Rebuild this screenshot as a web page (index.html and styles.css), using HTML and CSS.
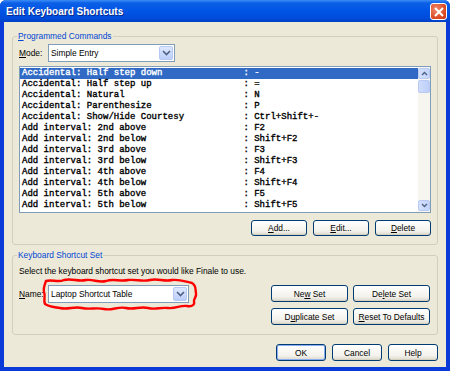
FILE: index.html
```html
<!DOCTYPE html>
<html lang="en">
<head>
    <meta charset="UTF-8">
    <title>Edit Keyboard Shortcuts</title>
    <link rel="stylesheet" href="styles.css">
</head>
<body>
<div class="window">
    <div class="titlebar">
        <span class="title">Edit Keyboard Shortcuts</span>
        <span class="close-button">
            <svg width="10" height="10" viewBox="0 0 10 10"><path d="M1,1 L9,9 M9,1 L1,9" stroke="#fff" stroke-width="2" fill="none"/></svg>
        </span>
    </div>
    <div class="client">
        <fieldset class="group commands-group">
            <legend><u>P</u>rogrammed Commands</legend>
            <div class="field-row">
                <span class="field-label"><u>M</u>ode:</span>
                <div class="combo mode-combo">
                    <span class="combo-text">Simple Entry</span>
                    <span class="combo-button">
                        <svg width="9" height="6" viewBox="0 0 9 6"><path d="M1,1 L4.5,4.5 L8,1" stroke="#4d6185" stroke-width="1.6" fill="none"/></svg>
                    </span>
                </div>
            </div>
            <div class="listbox">
                <div class="rows">
                    <div class="row selected"><span class="cmd">Accidental: Half step down</span><span class="key">: -</span></div>
                    <div class="row"><span class="cmd">Accidental: Half step up</span><span class="key">: =</span></div>
                    <div class="row"><span class="cmd">Accidental: Natural</span><span class="key">: N</span></div>
                    <div class="row"><span class="cmd">Accidental: Parenthesize</span><span class="key">: P</span></div>
                    <div class="row"><span class="cmd">Accidental: Show/Hide Courtesy</span><span class="key">: Ctrl+Shift+-</span></div>
                    <div class="row"><span class="cmd">Add interval: 2nd above</span><span class="key">: F2</span></div>
                    <div class="row"><span class="cmd">Add interval: 2nd below</span><span class="key">: Shift+F2</span></div>
                    <div class="row"><span class="cmd">Add interval: 3rd above</span><span class="key">: F3</span></div>
                    <div class="row"><span class="cmd">Add interval: 3rd below</span><span class="key">: Shift+F3</span></div>
                    <div class="row"><span class="cmd">Add interval: 4th above</span><span class="key">: F4</span></div>
                    <div class="row"><span class="cmd">Add interval: 4th below</span><span class="key">: Shift+F4</span></div>
                    <div class="row"><span class="cmd">Add interval: 5th above</span><span class="key">: F5</span></div>
                    <div class="row"><span class="cmd">Add interval: 5th below</span><span class="key">: Shift+F5</span></div>
                </div>
                <div class="scrollbar">
                    <span class="scroll-button">
                        <svg width="7" height="5" viewBox="0 0 7 5"><path d="M1,4 L3.5,1.5 L6,4" stroke="#4d6185" stroke-width="1.4" fill="none"/></svg>
                    </span>
                    <div class="scroll-track">
                        <span class="scroll-thumb"></span>
                    </div>
                    <span class="scroll-button">
                        <svg width="7" height="5" viewBox="0 0 7 5"><path d="M1,1 L3.5,3.5 L6,1" stroke="#4d6185" stroke-width="1.4" fill="none"/></svg>
                    </span>
                </div>
            </div>
            <div class="button-row">
                <button class="btn"><u>A</u>dd...</button>
                <button class="btn"><u>E</u>dit...</button>
                <button class="btn"><u>D</u>elete</button>
            </div>
        </fieldset>

        <fieldset class="group set-group">
            <legend>Keyboard Shortcut Set</legend>
            <p class="hint">Select the keyboard shortcut set you would like Finale to use.</p>
            <div class="set-row">
                <div class="field-row">
                    <span class="field-label"><u>N</u>ame:</span>
                    <div class="combo name-combo">
                        <span class="combo-text">Laptop Shortcut Table</span>
                        <span class="combo-button">
                            <svg width="9" height="6" viewBox="0 0 9 6"><path d="M1,1 L4.5,4.5 L8,1" stroke="#4d6185" stroke-width="1.6" fill="none"/></svg>
                        </span>
                    </div>
                </div>
                <div class="set-buttons">
                    <button class="btn wide">Ne<u>w</u> Set</button>
                    <button class="btn wide">De<u>l</u>ete Set</button>
                    <button class="btn wide">D<u>u</u>plicate Set</button>
                    <button class="btn wide"><u>R</u>eset To Defaults</button>
                </div>
            </div>
        </fieldset>

        <div class="dialog-buttons">
            <button class="btn small default">OK</button>
            <button class="btn small">Cancel</button>
            <button class="btn small">Help</button>
        </div>
    </div>

    <!-- red pen mark around the Name box -->
    <svg class="scribble" width="450" height="371" viewBox="0 0 450 371">
        <path d="M46,281 C52,279 58,283 64,280 C72,278 78,282 86,280 C94,279 98,283 106,281 C114,278 120,282 128,280 C136,279 142,282 150,280 C158,278 164,282 172,280 C180,279 186,282 192,283 C197,286 195,290 196,293 C197,297 193,299 194,302 C195,305 191,307 187,306 C180,305 176,309 168,308 C160,307 156,310 148,308 C140,306 134,310 126,308 C118,306 112,311 104,309 C96,307 90,310 82,308 C74,306 68,310 60,308 C52,307 48,306 45,304 C43,300 46,296 44,292 C43,288 45,284 46,281 Z" stroke="#ff0000" stroke-width="2.4" fill="none" stroke-linejoin="round"/>
    </svg>
</div>
</body>
</html>
```

FILE: styles.css
```css
body {
    margin: 0;
    background: #ffffff;
    font-family: "Liberation Sans", Arial, sans-serif;
    font-size: 8.4px;
}

.window {
    position: relative;
    width: 450px;
    height: 371px;
    display: flex;
    flex-direction: column;
    background: #0a3bd8;
    border-radius: 6px 6px 0 0;
    overflow: hidden;
}

.titlebar {
    height: 22px;
    display: flex;
    align-items: center;
    padding: 0 3px 0 6px;
    background: linear-gradient(#3b8ef5 0, #0c5fe6 3px, #0055e5 50%, #004ad9 85%, #003fc6 100%);
}

.title {
    flex: 1;
    color: #fff;
    font-weight: bold;
    font-size: 10px;
    text-shadow: 1px 1px 0 #0a2a8a;
    padding-top: 1px;
}

.close-button {
    width: 17px;
    height: 17px;
    margin-top: 1px;
    display: flex;
    align-items: center;
    justify-content: center;
    border: 1px solid #fff;
    border-radius: 3px;
    background: radial-gradient(circle at 35% 35%, #f08a6c, #d9461f 70%, #c0381a);
    box-sizing: border-box;
}

.client {
    flex: 1;
    margin: 0 4px 4px 4px;
    background: #ece9d8;
    padding: 8px 8px 0 8px;
    display: flex;
    flex-direction: column;
}

.group {
    margin: 0;
    padding: 2px 6px 8px 6px;
    border: 1px solid #d0d0bf;
    border-radius: 3px;
}

.group legend {
    color: #0046d5;
    line-height: 12px;
    padding: 0 1px;
    margin-left: -2px;
}

.set-group {
    margin-top: 4px;
    padding-bottom: 9px;
}

.field-row {
    display: flex;
    align-items: center;
}

.field-label {
    width: 29px;
}

.combo {
    height: 18px;
    display: flex;
    align-items: center;
    border: 1px solid #7f9db9;
    background: #fff;
    box-sizing: border-box;
}

.mode-combo {
    width: 127px;
}

.name-combo {
    width: 141px;
}

.combo-text {
    flex: 1;
    padding-left: 2px;
}

.combo-button {
    width: 14px;
    height: 14px;
    margin-right: 1px;
    display: flex;
    align-items: center;
    justify-content: center;
    border: 1px solid #b7c9f3;
    border-radius: 2px;
    background: linear-gradient(#dde7fd, #bccff9);
    box-sizing: border-box;
}

.listbox {
    margin-top: 4px;
    height: 147px;
    display: flex;
    border: 1px solid #7f9db9;
    background: #fff;
    box-sizing: border-box;
}

.rows {
    flex: 1;
    padding-top: 1px;
    font-family: "Liberation Mono", "Courier New", monospace;
    font-size: 9px;
    -webkit-text-stroke: 0.35px currentColor;
}

.row {
    height: 11px;
    line-height: 11px;
    padding-left: 2px;
    white-space: pre;
    color: #000;
}

.row.selected {
    background: #316ac5;
    color: #fff;
}

.cmd {
    display: inline-block;
    width: 41ch;
}

.scrollbar {
    width: 12px;
    display: flex;
    flex-direction: column;
    padding: 1px 0;
    background: #f6f5f0;
}

.scroll-button {
    height: 11px;
    display: flex;
    align-items: center;
    justify-content: center;
    border: 1px solid #b9cbf3;
    border-radius: 2px;
    background: linear-gradient(90deg, #d4e0fc, #c3d4fb);
    box-sizing: border-box;
}

.scroll-track {
    flex: 1;
    padding-top: 1px;
}

.scroll-thumb {
    display: block;
    height: 13px;
    border: 1px solid #b9cbf3;
    border-radius: 2px;
    background: linear-gradient(90deg, #cfdcfc, #bccffa);
    box-sizing: border-box;
}

.button-row {
    margin-top: 7px;
    display: flex;
    justify-content: flex-end;
    gap: 6px;
}

.btn {
    width: 56px;
    height: 16px;
    padding: 0;
    font-family: "Liberation Sans", Arial, sans-serif;
    font-size: 8.4px;
    color: #000;
    border: 1px solid #003c74;
    border-radius: 3px;
    background: linear-gradient(#ffffff, #f3f2ec 70%, #dcd8cc);
    box-shadow: inset 0 -1px 0 #d6d0c0;
}

.btn u,
.field-label u,
.group legend u {
    text-decoration-thickness: 1px;
    text-underline-offset: 1px;
}

.hint {
    margin: 2px 0 0 0;
    line-height: 12px;
}

.set-row {
    margin-top: 8px;
    display: flex;
    align-items: flex-start;
    justify-content: space-between;
}

.set-buttons {
    display: grid;
    grid-template-columns: 77px 77px;
    gap: 6px 5px;
    margin-right: 1px;
}

.btn.wide {
    width: 77px;
    height: 17px;
}

.dialog-buttons {
    margin-top: 9px;
    display: flex;
    justify-content: flex-end;
    gap: 6px;
}

.btn.small {
    width: 50px;
    height: 17px;
}

.btn.default {
    box-shadow: inset 0 0 0 1px #89adf0, inset 0 -1px 0 #d6d0c0;
}

.scribble {
    position: absolute;
    left: 0;
    top: 0;
    pointer-events: none;
}
```
